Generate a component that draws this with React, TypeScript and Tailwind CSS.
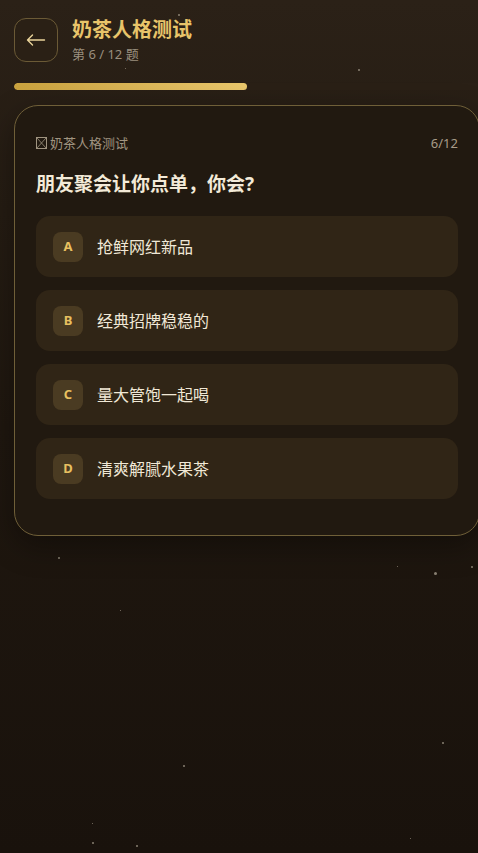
import React from "react";

const stars: [number, number, number][] = [
  [178, 14, 1.5], [125, 68, 1], [358, 69, 1.5], [58, 557, 2], [434, 572, 2.5], [471, 566, 2],
  [397, 566, 1], [120, 610, 1], [442, 742, 2], [183, 765, 2], [92, 823, 1], [92, 842, 1.5],
  [136, 845, 1.5], [410, 838, 1],
];

const options = [
  { k: "A", t: "抢鲜网红新品" },
  { k: "B", t: "经典招牌稳稳的" },
  { k: "C", t: "量大管饱一起喝" },
  { k: "D", t: "清爽解腻水果茶" },
];

export default function App() {
  return (
    <div
      className="relative w-[478px] h-[853px] overflow-hidden bg-gradient-to-b from-[#2b2117] via-[#1f170f] to-[#19120c]"
      style={{ fontFamily: '"Noto Sans", "Noto Sans CJK SC", sans-serif' }}
    >
      {stars.map(([x, y, s], i) => (
        <div
          key={i}
          className="absolute rounded-full bg-[#b8ae9c] opacity-70"
          style={{ left: x, top: y, width: s, height: s }}
        />
      ))}
      <div className="relative pl-[14px] w-[480px]">
        <div className="flex items-center gap-[14px] pt-[17px]">
          <button className="w-[44px] h-[44px] rounded-[12px] border border-[#6b5a36] bg-[#2a2015] flex items-center justify-center text-[#e8c46a]">
            <svg width="20" height="14" viewBox="0 0 20 14" fill="none" stroke="#ead39a" strokeWidth="1.4" strokeLinecap="round" strokeLinejoin="round">
              <path d="M18.5 7H2M6.5 2L1.5 7L6.5 12" />
            </svg>
          </button>
          <div className="flex flex-col">
            <div className="text-[20px] leading-[26px] font-bold text-[#e8c46a]">奶茶人格测试</div>
            <div className="text-[13px] leading-[18px] mt-[2px] text-[#9a8f7f]">第 6 / 12 题</div>
          </div>
        </div>
        <div className="mt-[20px] w-[466px] h-[7px] rounded-full bg-[#2a2016] overflow-hidden">
          <div className="h-full w-1/2 rounded-full bg-gradient-to-r from-[#c9a23e] to-[#e9c76c]" />
        </div>
        <div className="mt-[15px] w-[466px] rounded-[24px] border border-[#6f5f38] bg-[#211910] px-[21px] pt-[28px] pb-[36px] shadow-[0_10px_30px_rgba(0,0,0,0.35)]">
          <div className="flex items-center justify-between pr-[0px]">
            <div className="text-[13px] leading-[18px] text-[#a09480] flex items-center gap-[3px]">
              <span className="inline-block w-[11px] h-[12px] border border-[#a09480] relative">
                <svg className="absolute inset-0" width="9" height="10" viewBox="0 0 9 10">
                  <path d="M0 0L9 10M9 0L0 10" stroke="#a09480" strokeWidth="0.8" />
                </svg>
              </span>
              <span>奶茶人格测试</span>
            </div>
            <div className="text-[13px] leading-[18px] text-[#a89c88]">6/12</div>
          </div>
          <div className="mt-[19px] text-[19px] leading-[27px] font-bold text-[#f3ead8]">朋友聚会让你点单，你会?</div>
          <div className="mt-[18px] flex flex-col gap-[13px]">
            {options.map((o) => (
              <div key={o.k} className="h-[61px] rounded-[14px] bg-[#302516] flex items-center px-[17px] gap-[14px]">
                <div className="w-[30px] h-[30px] rounded-[8px] bg-[#4a3b22] flex items-center justify-center text-[13px] font-bold text-[#e8c060]">
                  {o.k}
                </div>
                <div className="text-[16px] text-[#f0e8d6]">{o.t}</div>
              </div>
            ))}
          </div>
        </div>
      </div>
    </div>
  );
}
